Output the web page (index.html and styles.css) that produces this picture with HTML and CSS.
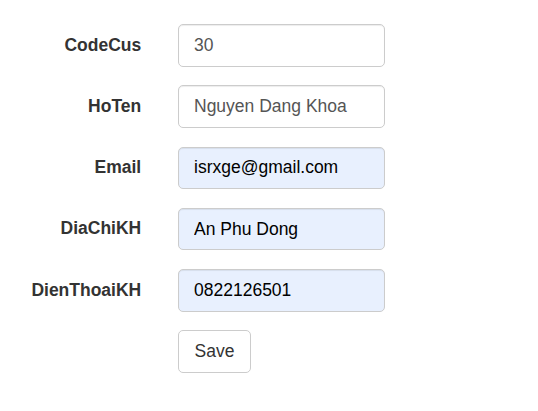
FILE: index.html
```html
<!DOCTYPE html>
<html>
<head>
<meta charset="utf-8">
<link rel="stylesheet" href="styles.css">
</head>
<body>
<form class="form">
  <div class="group">
    <label class="label">CodeCus</label>
    <div class="field"><input class="input" type="text" value="30"></div>
  </div>
  <div class="group">
    <label class="label">HoTen</label>
    <div class="field"><input class="input" type="text" value="Nguyen Dang Khoa"></div>
  </div>
  <div class="group">
    <label class="label">Email</label>
    <div class="field"><input class="input autofill" type="text" value="isrxge@gmail.com"></div>
  </div>
  <div class="group">
    <label class="label">DiaChiKH</label>
    <div class="field"><input class="input autofill" type="text" value="An Phu Dong"></div>
  </div>
  <div class="group">
    <label class="label">DienThoaiKH</label>
    <div class="field"><input class="input autofill" type="text" value="0822126501"></div>
  </div>
  <div class="group">
    <div class="label"></div>
    <div class="field"><button class="btn" type="button">Save</button></div>
  </div>
</form>
</body>
</html>
```

FILE: styles.css
```css
* { box-sizing: border-box; }
html, body { margin: 0; padding: 0; background: #fff; }
body {
  font-family: "Liberation Sans", Arial, sans-serif;
  font-size: 17.5px;
  color: #333;
}
.form { padding-top: 24px; }
.group {
  display: flex;
  align-items: flex-start;
  margin-bottom: 18.75px;
}
.label {
  width: 160px;
  flex: none;
  padding-right: 18.75px;
  padding-top: 8.5px;
  text-align: right;
  font-weight: bold;
  line-height: 25px;
  color: #333;
}
.field { margin-left: 18px; }
.input {
  display: block;
  width: 207px;
  height: 42.5px;
  padding: 7.5px 15px;
  font-family: "Liberation Sans", Arial, sans-serif;
  font-size: 17.5px;
  line-height: 25px;
  color: #555;
  background: #fff;
  border: 1.25px solid #ccc;
  border-radius: 5px;
  box-shadow: inset 0 1px 1px rgba(0,0,0,.075);
  outline: none;
}
.input.autofill {
  background: #e8f0fe;
  color: #000;
}
.btn {
  display: block;
  height: 42.5px;
  width: 73px;
  padding: 7.5px 15px;
  font-family: "Liberation Sans", Arial, sans-serif;
  font-size: 17.5px;
  line-height: 25px;
  color: #333;
  background: #fff;
  border: 1.25px solid #ccc;
  border-radius: 5px;
}
```
